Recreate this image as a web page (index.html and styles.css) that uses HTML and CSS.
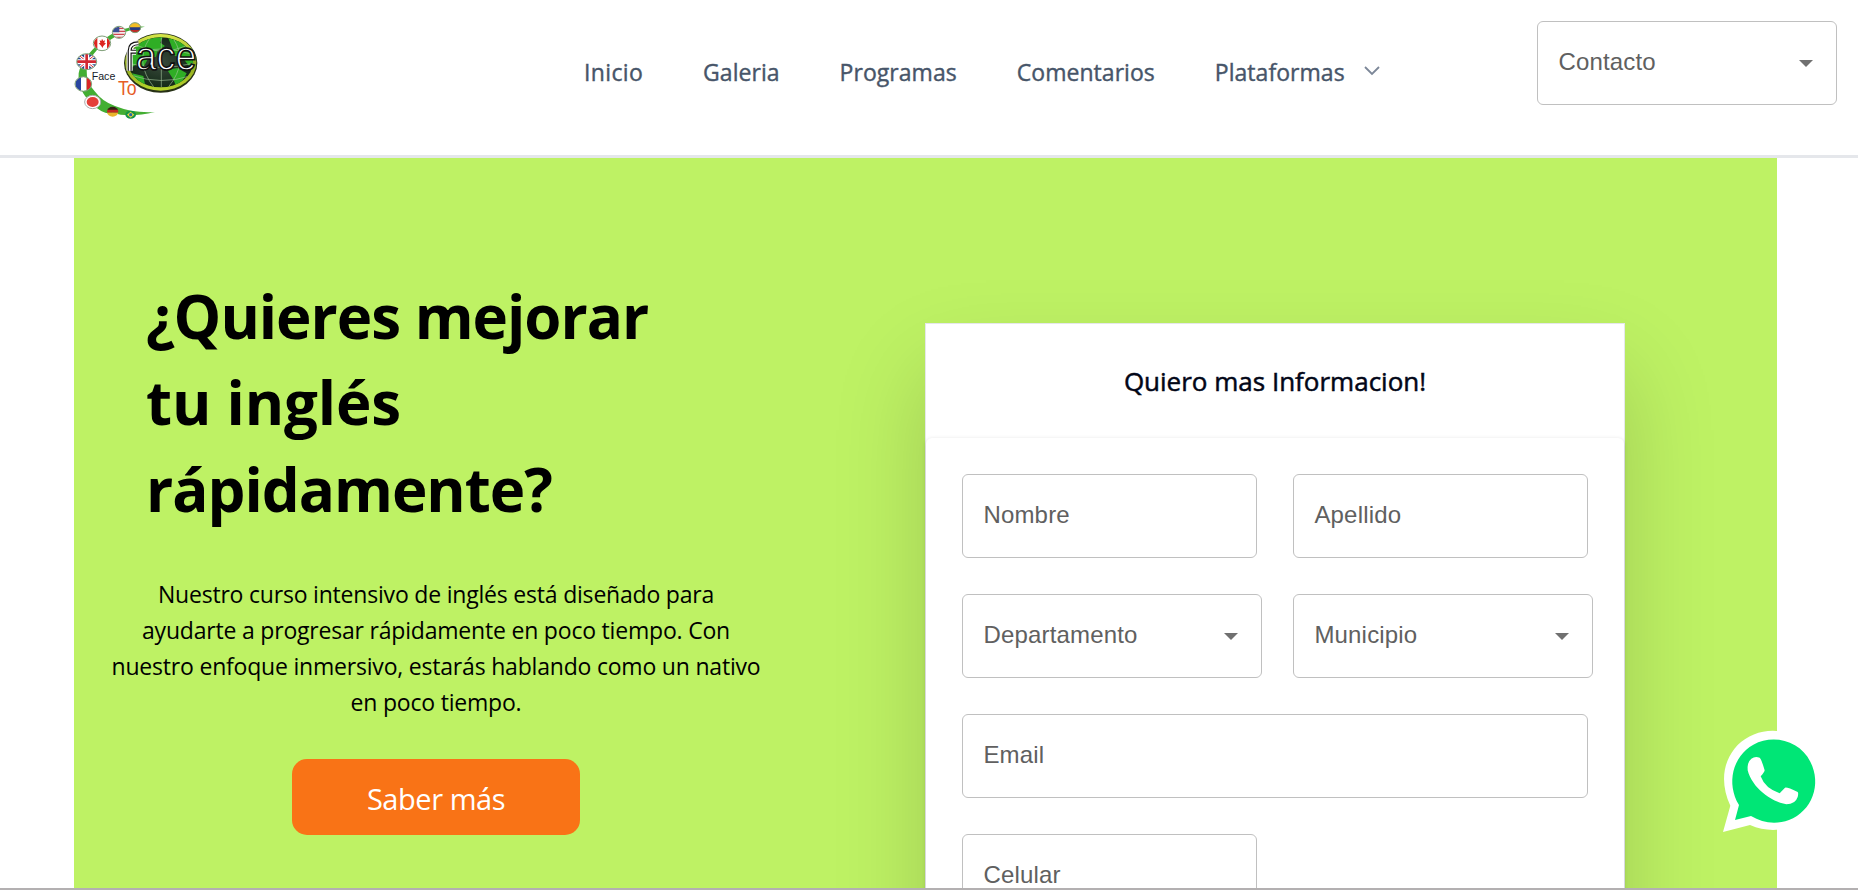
FILE: index.html
```html
<!DOCTYPE html>
<html lang="es">
<head>
<meta charset="utf-8">
<title>Face to Face</title>
<link rel="stylesheet" href="styles.css">
</head>
<body>
<header class="header">
  <a class="logo" href="#">
    <svg class="logo-art" viewBox="42 30 375 300" width="125" height="100" aria-label="Face to Face">
      <defs>
        <linearGradient id="rim" x1="0" y1="0" x2="0" y2="1"><stop offset="0" stop-color="#d8e84a"/><stop offset=".5" stop-color="#8da61e"/><stop offset="1" stop-color="#b7d52c"/></linearGradient>
        <radialGradient id="sea"><stop offset="0" stop-color="#3a4a3c"/><stop offset="1" stop-color="#142a18"/></radialGradient>
        <clipPath id="globe"><ellipse cx="302" cy="157" rx="97" ry="75"/></clipPath>
        <clipPath id="f1"><ellipse cx="225" cy="53" rx="17" ry="15"/></clipPath>
        <clipPath id="f2"><ellipse cx="177" cy="67" rx="19" ry="17"/></clipPath>
        <clipPath id="f3"><ellipse cx="126" cy="100" rx="24" ry="20"/></clipPath>
        <clipPath id="f4"><ellipse cx="80" cy="155" rx="29" ry="23"/></clipPath>
        <clipPath id="f5"><ellipse cx="70" cy="222" rx="24" ry="21"/></clipPath>
        <clipPath id="f7"><ellipse cx="158" cy="305" rx="17" ry="15"/></clipPath>
      </defs>
      <path d="M255 50Q180 46 122 96T56 190Q52 240 94 280T158 308Q205 324 285 306Q220 310 165 288Q126 274 106 246Q78 218 80 180Q92 125 144 94Q190 60 255 50Z" fill="#43ae32"/>
      <g clip-path="url(#f1)"><path fill="#f2bd25" d="M205 35h40v20h-40z"/><path fill="#263a83" d="M205 52h40v9h-40z"/><path fill="#bd2b28" d="M205 60h40v12h-40z"/></g>
      <g clip-path="url(#f2)"><path fill="#f4eded" d="M155 47h45v40h-45z"/><path stroke="#cf4650" stroke-width="4" d="M155 55h45M155 64h45M155 73h45M155 82h45"/><path fill="#3b4f94" d="M155 47h23v20h-23z"/></g>
      <g clip-path="url(#f3)"><path fill="#fff" d="M100 78h54v44h-54z"/><path fill="#dc2620" d="M100 78h12v44h-12zM141 78h12v44h-12zM126 86l4 7 5-2-2 8 5 1-8 8-3 6-3-6-8-8 5-1-2-8 5 2z"/></g>
      <g clip-path="url(#f4)"><path fill="#28468e" d="M50 130h60v50H50z"/><path stroke="#fff" stroke-width="9" d="M50 130l60 50M110 130l-60 50"/><path stroke="#d8343a" stroke-width="3" d="M50 130l60 50M110 130l-60 50"/><path stroke="#fff" stroke-width="15" d="M80 130v50M50 155h60"/><path stroke="#d22830" stroke-width="8" d="M80 130v50M50 155h60"/></g>
      <g clip-path="url(#f5)"><path fill="#2946a0" d="M45 198h18v48H45z"/><path fill="#fff" d="M63 198h17v48H63z"/><path fill="#da2525" d="M80 198h18v48H80z"/></g>
      <ellipse cx="98" cy="276" rx="24" ry="20" fill="#fff" stroke="#aaa" stroke-width="3"/><ellipse cx="98" cy="276" rx="18" ry="15" fill="#e43d38"/>
      <g clip-path="url(#f7)"><path fill="#332015" d="M140 288h38v12h-38z"/><path fill="#c22723" d="M140 299h38v9h-38z"/><path fill="#e9b52b" d="M140 308h38v14h-38z"/></g>
      <ellipse cx="212" cy="314" rx="16" ry="12" fill="#159447"/><path d="M212 305l11 9-11 9-11-9z" fill="#eedb35"/><circle cx="212" cy="314" r="5" fill="#2767aa"/>
      <g fill="none" stroke="#7f9f78" stroke-width="3"><ellipse cx="225" cy="53" rx="17" ry="15"/><ellipse cx="177" cy="67" rx="20" ry="18"/><ellipse cx="126" cy="100" rx="26" ry="22"/><ellipse cx="80" cy="155" rx="30" ry="24"/><ellipse cx="70" cy="222" rx="25" ry="22"/></g>
      <ellipse cx="302" cy="159" rx="110" ry="89" fill="#263015"/>
      <ellipse cx="302" cy="157" rx="107" ry="85" fill="url(#rim)"/>
      <ellipse cx="302" cy="157" rx="97" ry="75" fill="url(#sea)"/>
      <g clip-path="url(#globe)">
        <path fill="#2fae25" d="M225 110l32-22 52-8-8 18 14 10-22 14-5 18-24 6-13 24-24-6-18 12zM325 84l46 14 28 42 4 30-18-4-18-24-22-4-10-28zM322 180l30-6 28 16-14 26-16 18-9-24zM216 190l34 8 6 30-30-14z"/>
        <path fill="none" stroke="#a8c79f" stroke-width="1.8" d="M206 130q100-28 195 4M204 160q95 24 196 0M214 196q90 30 176 2M268 86q-46 70 14 146M304 82v150M340 86q46 70-14 144M230 106q72 34 148 2"/>
      </g>
      <g fill="none" stroke-linejoin="round">
        <path stroke="#fff" stroke-width="18" d="M209 182V122Q209 100 235 100M209 125H228"/>
        <path stroke="#111" stroke-width="12" d="M209 182V122Q209 100 235 100M209 125H228"/>
        <path stroke="#fff" stroke-width="5" d="M209 182V122Q209 100 235 100M209 125H228"/>
      </g>
      <text class="logo-word" x="227" y="181" textLength="182" lengthAdjust="spacingAndGlyphs">ace</text>
      <text class="logo-face" x="95" y="209" textLength="71" lengthAdjust="spacingAndGlyphs">Face</text>
      <text class="logo-to" x="174" y="256" textLength="56" lengthAdjust="spacingAndGlyphs">To</text>
    </svg>
  </a>
  <nav class="nav">
    <a class="nav-link" href="#">Inicio</a>
    <a class="nav-link" href="#">Galeria</a>
    <a class="nav-link" href="#">Programas</a>
    <a class="nav-link" href="#">Comentarios</a>
    <a class="nav-link" href="#">Plataformas</a>
    <svg class="chevron" width="16" height="10" viewBox="0 0 16 10"><path d="M1 1l7 7 7-7" fill="none" stroke="#7c8798" stroke-width="1.8"/></svg>
  </nav>
  <div class="field select contact"><span>Contacto</span><i class="caret"></i></div>
</header>
<main class="hero">
  <section class="pitch">
    <h1 class="title">¿Quieres mejorar<br><span class="title-loose">tu inglés</span><br>rápidamente?</h1>
    <p class="copy">Nuestro curso intensivo de inglés está diseñado para<br>ayudarte a progresar rápidamente en poco tiempo. Con<br>nuestro enfoque inmersivo, estarás hablando como un nativo<br>en poco tiempo.</p>
    <a class="button" href="#">Saber más</a>
  </section>
  <section class="card">
    <h2 class="card-title">Quiero mas Informacion!</h2>
    <form class="form">
      <div class="field">Nombre</div>
      <div class="field">Apellido</div>
      <div class="field select"><span>Departamento</span><i class="caret"></i></div>
      <div class="field select"><span>Municipio</span><i class="caret"></i></div>
      <div class="field wide">Email</div>
      <div class="field">Celular</div>
    </form>
  </section>
</main>
<a class="whatsapp" href="#" aria-label="WhatsApp">
  <svg width="100" height="103" viewBox="69 60 300 309">
    <path fill="#fff" d="M69 366l22-79C60 220 67 154 113 105 164 54 247 47 307 91c61 44 79 130 41 195-39 68-122 92-198 59z"/>
    <path fill="#00e676" d="M105 330l12-45C78 219 98 139 160 104c61-33 140-11 171 51 35 68 5 148-64 175-39 14-80 9-114-12z"/>
    <path fill="#fff" d="M154 146q11-8 25-3 5 3 15 38-1 6-12 18 13 36 57 51l16-17q5-3 38 13 3 3 0 15-7 22-34 22c-48-8-103-51-116-102q-2-24 11-35z"/>
  </svg>
</a>
<div class="bottom-line"></div>
</body>
</html>
```

FILE: styles.css
```css
* { box-sizing: border-box; }
html, body { margin: 0; height: 890px; overflow: hidden; background: #fff; }
body { font-family: "Open Sans", "Noto Sans", sans-serif; color: #000; }
a { text-decoration: none; }

.header { display: grid; grid-template-columns: 510px 1fr 300px; height: 158px; padding: 20px 21px 0 74px; border-bottom: 3px solid #e5e7eb; }
.logo { display: block; width: 125px; height: 100px; }
.logo-art { display: block; overflow: visible; }
.logo-word { font: 124px "Liberation Sans", sans-serif; fill: #fff; stroke: #111; stroke-width: 5px; }
.logo-face { font: 33px "Liberation Sans", sans-serif; fill: #171b2a; }
.logo-to { font: 61px "Liberation Sans", sans-serif; fill: #e65c25; }

.nav { display: flex; gap: 60px; align-items: center; height: 103px; }
.nav-link { font-size: 23px; line-height: 36px; letter-spacing: .04px; color: #475569; -webkit-text-stroke: .4px #475569; white-space: nowrap; }
.nav-link:first-child { letter-spacing: .35px; }
.chevron { margin-left: -41px; margin-top: -2px; }

.field { display: flex; align-items: center; height: 84px; padding: 0 20px 3px 20.4px; border: 1px solid #c0c0c0; border-radius: 6px; font: 24px "Liberation Sans", Arial, sans-serif; letter-spacing: .18px; color: #606060; background: #fff; }
.select { justify-content: space-between; width: 300px; }
.caret { margin-right: 3px; margin-top: 4px; border: 7.5px solid transparent; border-top-color: #707070; border-bottom: 0; }
.contact { margin-top: 1px; }

.hero { display: flex; width: 1703px; height: 732px; margin-left: 74px; background: #bef264; overflow: hidden; }
.pitch { display: flex; flex-direction: column; align-items: center; width: 724px; padding-top: 115px; }
.title { align-self: flex-start; margin: 0 0 0 72px; font-size: 60px; line-height: 86.4px; font-weight: 700; letter-spacing: -1px; white-space: nowrap; }
.title-loose { letter-spacing: -.15px; }
.copy { margin: 44px 0 39px; font-size: 23px; line-height: 36px; letter-spacing: -.2px; text-align: center; white-space: nowrap; }
.button { display: flex; align-items: center; justify-content: center; width: 288px; height: 76px; border-radius: 15px; background: #f97316; color: #fff; font-size: 29px; letter-spacing: -.45px; padding-top: 2px; }

.card { width: 700px; height: 900px; margin: 165px 0 0 127px; flex: none; background: #fff; border: 1px solid #e5e7eb; box-shadow: 0 46px 88px 0 rgba(0,0,0,.16); }
.card-title { margin: 0; height: 114px; line-height: 115px; text-align: center; font-size: 26px; font-weight: 400; color: #020617; -webkit-text-stroke: .5px #020617; }
.form { display: grid; grid-template-columns: 295px 295px; gap: 36px; padding: 36px; border-radius: 6px; box-shadow: 0 1px 4px rgba(0,0,0,.15); }
.wide { grid-column: span 2; }

.whatsapp { position: fixed; left: 1723px; top: 730px; }
.bottom-line { position: fixed; left: 0; right: 0; bottom: 0; height: 2px; background: #b3b0b1; }
```
